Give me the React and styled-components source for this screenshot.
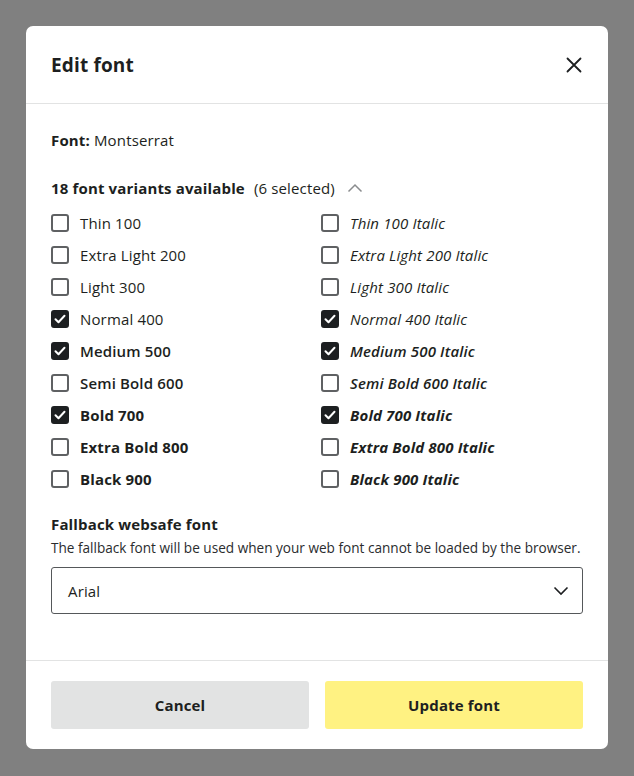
import React, { useState } from "react";
import styled, { createGlobalStyle } from "styled-components";

const Global = createGlobalStyle`
  html, body { margin: 0; padding: 0; }
  body {
    background: #808080;
    font-family: "Open Sans", Lato, sans-serif;
    color: #1d1f21;
    letter-spacing: 0.15px;
  }
`;

const Overlay = styled.div`
  width: 634px;
  height: 776px;
  box-sizing: border-box;
  padding: 26px 26px 0 26px;
  background: #808080;
`;

const Modal = styled.div`
  width: 582px;
  height: 723px;
  background: #fff;
  border-radius: 7px;
  display: flex;
  flex-direction: column;
  overflow: hidden;
`;

const Header = styled.div`
  height: 77px;
  flex: none;
  display: flex;
  align-items: center;
  justify-content: space-between;
  padding: 0 22px 0 25px;
  border-bottom: 1px solid #e2e3e3;
`;

const Title = styled.h2`
  margin: 0;
  font-size: 19px;
  font-weight: 700;
`;

const CloseButton = styled.button`
  border: 0;
  background: none;
  padding: 0;
  width: 24px;
  height: 24px;
  display: flex;
  align-items: center;
  justify-content: center;
  color: #1d1f21;
  cursor: pointer;
`;

const Body = styled.div`
  flex: 1;
  padding: 26px 25px 0 25px;
  display: flex;
  flex-direction: column;
`;

const FontLine = styled.div`
  font-size: 15px;
  line-height: 20px;
  b { font-weight: 700; }
`;

const VariantsHead = styled.div`
  margin-top: 28px;
  display: flex;
  align-items: center;
  font-size: 15px;
  line-height: 20px;
  b { font-weight: 700; margin-right: 9px; }
`;

const Chevron = styled.span`
  margin-left: 12px;
  display: inline-flex;
  color: #8a8c8e;
`;

const Grid = styled.div`
  margin-top: 16px;
  display: grid;
  grid-template-columns: 270px 1fr;
  row-gap: 14px;
`;

const Option = styled.label`
  display: flex;
  align-items: center;
  gap: 11px;
  height: 18px;
  font-size: 15px;
  font-weight: ${(p) => p.$weight};
  font-style: ${(p) => (p.$italic ? "italic" : "normal")};
  cursor: pointer;
`;

const Box = styled.span`
  width: 18px;
  height: 18px;
  box-sizing: border-box;
  border-radius: 3px;
  border: 2px solid ${(p) => (p.$checked ? "#1d1f21" : "#5f6163")};
  background: ${(p) => (p.$checked ? "#1d1f21" : "#fff")};
  display: flex;
  align-items: center;
  justify-content: center;
  flex: none;
`;

const SectionTitle = styled.div`
  margin-top: 26px;
  font-size: 15px;
  font-weight: 700;
  line-height: 20px;
`;

const Help = styled.div`
  margin-top: 6px;
  font-size: 13.6px;
  line-height: 16px;
  letter-spacing: 0;
  color: #2a2c2e;
  white-space: nowrap;
`;

const Select = styled.div`
  margin-top: 11px;
  height: 47px;
  box-sizing: border-box;
  border: 1px solid #55585a;
  border-radius: 3px;
  display: flex;
  align-items: center;
  justify-content: space-between;
  padding: 0 13px 0 16px;
  font-size: 15px;
`;

const Footer = styled.div`
  flex: none;
  height: 89px;
  border-top: 1px solid #e2e3e3;
  display: grid;
  grid-template-columns: 1fr 1fr;
  gap: 16px;
  padding: 20px 25px 0 25px;
  box-sizing: border-box;
`;

const Button = styled.button`
  height: 48px;
  border: 0;
  border-radius: 3px;
  font-family: inherit;
  font-size: 15px;
  font-weight: 700;
  letter-spacing: 0.15px;
  color: #1d1f21;
  background: ${(p) => (p.$primary ? "#fff282" : "#e2e3e3")};
  cursor: pointer;
`;

const weights = [
  ["Thin", 100],
  ["Extra Light", 200],
  ["Light", 300],
  ["Normal", 400],
  ["Medium", 500],
  ["Semi Bold", 600],
  ["Bold", 700],
  ["Extra Bold", 800],
  ["Black", 900],
];

const weightMap = { 100: 400, 200: 400, 300: 400, 400: 400, 500: 600, 600: 650, 700: 700, 800: 750, 900: 750 };

const Check = () => (
  <svg width="12" height="10" viewBox="0 0 12 10" fill="none">
    <path d="M1.5 5.2 L4.5 8.2 L10.5 1.8" stroke="#fff" strokeWidth="2" strokeLinecap="round" strokeLinejoin="round" />
  </svg>
);

export default function App() {
  const [sel, setSel] = useState({
    "400": true, "500": true, "700": true, "400i": true, "500i": true, "700i": true,
  });
  const toggle = (k) => setSel((s) => ({ ...s, [k]: !s[k] }));
  const items = [];
  weights.forEach(([n, w]) => {
    items.push({ key: `${w}`, label: `${n} ${w}`, w, italic: false });
    items.push({ key: `${w}i`, label: `${n} ${w} Italic`, w, italic: true });
  });
  return (
    <Overlay>
      <Global />
      <Modal>
        <Header>
          <Title>Edit font</Title>
          <CloseButton aria-label="Close">
            <svg width="16" height="16" viewBox="0 0 16 16">
              <path d="M1.5 1.5 L14.5 14.5 M14.5 1.5 L1.5 14.5" stroke="#1d1f21" strokeWidth="1.8" strokeLinecap="round" />
            </svg>
          </CloseButton>
        </Header>
        <Body>
          <FontLine><b>Font:</b> Montserrat</FontLine>
          <VariantsHead>
            <b>18 font variants available</b>(6 selected)
            <Chevron>
              <svg width="16" height="10" viewBox="0 0 16 10">
                <path d="M1.5 8.5 L8 2 L14.5 8.5" stroke="currentColor" strokeWidth="1.5" fill="none" />
              </svg>
            </Chevron>
          </VariantsHead>
          <Grid>
            {items.map((it) => (
              <Option key={it.key} $weight={weightMap[it.w]} $italic={it.italic} onClick={() => toggle(it.key)}>
                <Box $checked={!!sel[it.key]}>{sel[it.key] && <Check />}</Box>
                {it.label}
              </Option>
            ))}
          </Grid>
          <SectionTitle>Fallback websafe font</SectionTitle>
          <Help>The fallback font will be used when your web font cannot be loaded by the browser.</Help>
          <Select>
            Arial
            <svg width="16" height="10" viewBox="0 0 16 10">
              <path d="M1.5 1.5 L8 8 L14.5 1.5" stroke="#1d1f21" strokeWidth="1.6" fill="none" />
            </svg>
          </Select>
        </Body>
        <Footer>
          <Button>Cancel</Button>
          <Button $primary>Update font</Button>
        </Footer>
      </Modal>
    </Overlay>
  );
}
